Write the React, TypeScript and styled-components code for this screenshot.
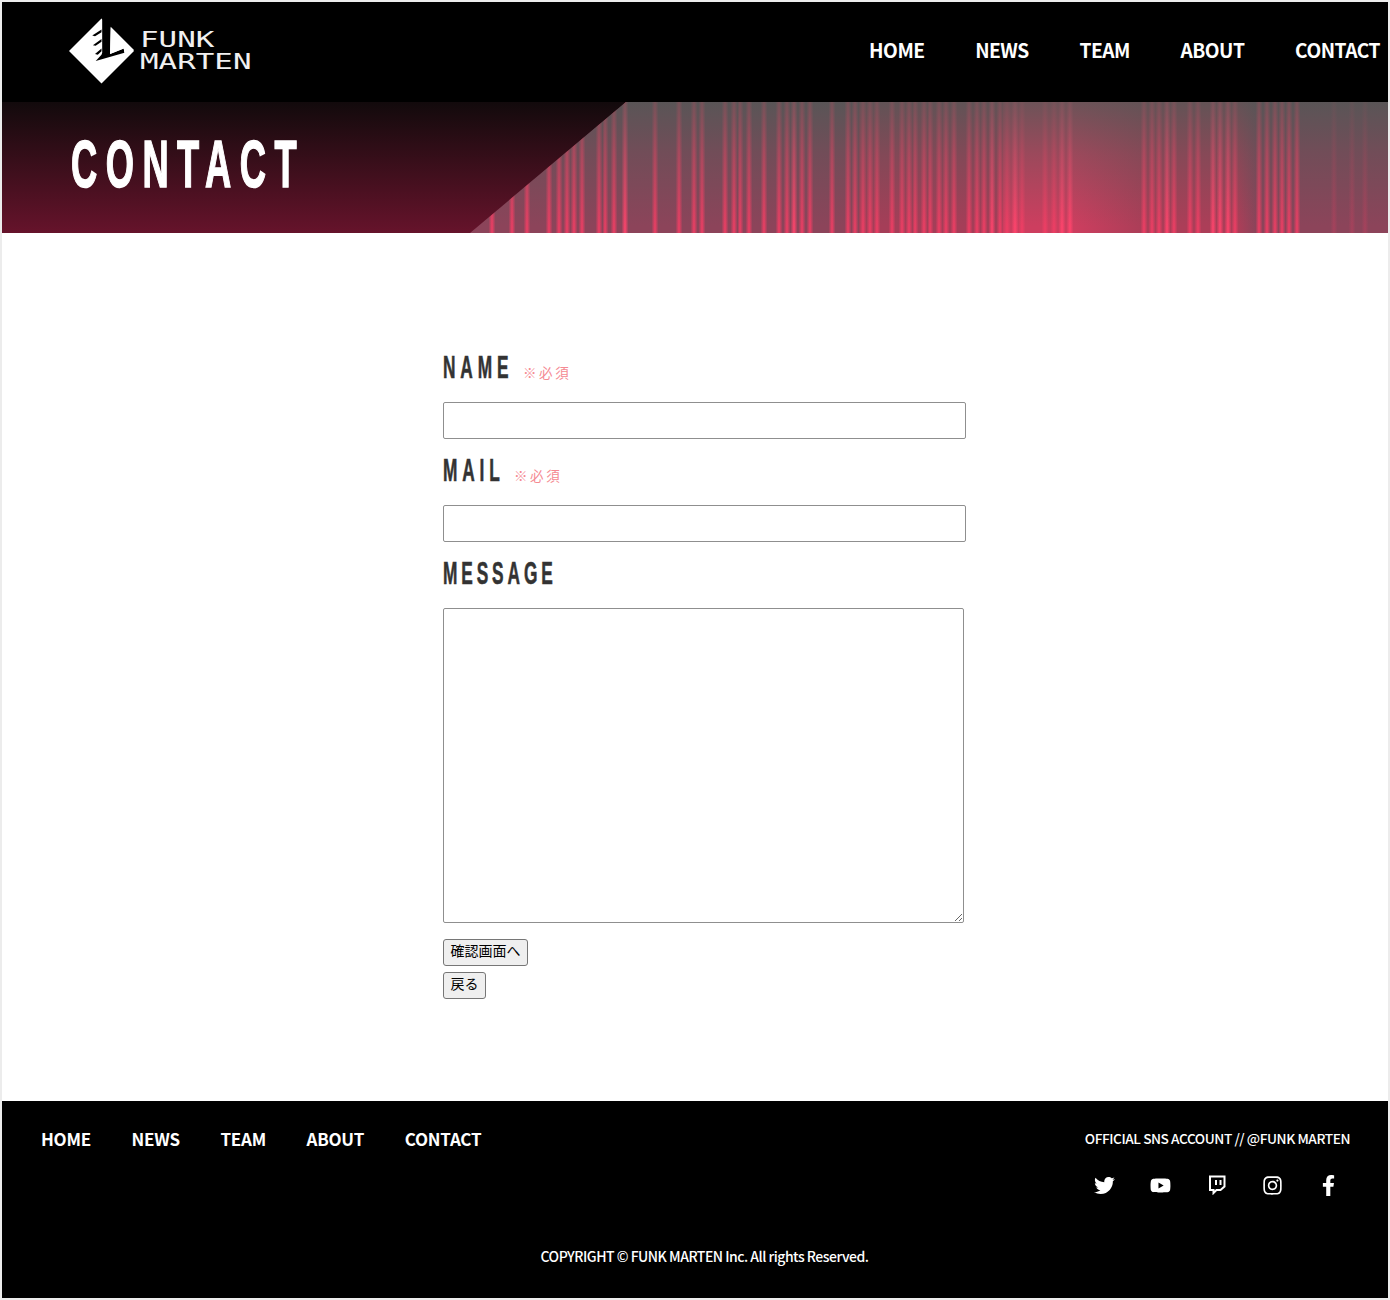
import React from 'react';
import styled, { createGlobalStyle } from 'styled-components';
import { FaTwitter, FaYoutube, FaInstagram, FaFacebookF } from 'react-icons/fa';

const STRIPES = [
    490, 510, 525, 547, 557, 565, 572, 580, 597, 603, 612, 623, 653, 677, 692, 700, 723, 732, 738, 747, 762,
    777, 785, 792, 800, 808, 830, 846, 853, 861, 868, 875, 890, 900, 907, 913, 922, 928, 937, 944, 952, 967,
    975, 982, 990, 998, 1005, 1013, 1020, 1043, 1052, 1060, 1068, 1142, 1150, 1157, 1165, 1172, 1188, 1196,
    1211, 1218, 1226, 1233, 1257, 1265, 1273, 1280, 1287, 1295, 1332, 1350, 1363,
];
const BRIGHT = [623, 792, 990, 1013, 1060, 1068, 1165, 1211, 1218, 1226];

// base tone of the band between the stripes
const baseTone = (x: number) => {
    if (x >= 1005 && x < 1115) return 'rgb(205,62,95)';
    if (x >= 1115 && x < 1240) return 'rgb(172,62,88)';
    if (x >= 860 && x < 1005) return 'rgb(165,62,88)';
    return 'rgb(140,68,90)';
};

const buildStripes = () => {
    const stops: string[] = [`rgb(140,68,90) 0px`];
    STRIPES.forEach((x) => {
        const peak = BRIGHT.includes(x) ? 'rgb(255,68,108)' : x > 1300 ? 'rgb(165,66,92)' : 'rgb(238,62,100)';
        stops.push(`${baseTone(x)} ${x - 3.5}px`, `${peak} ${x}px`, `${baseTone(x)} ${x + 3.5}px`);
    });
    stops.push('rgb(140,68,90) 100%');
    return `linear-gradient(90deg, ${stops.join(', ')})`;
};

const GlobalStyle = createGlobalStyle`
    html, body {
        margin: 0;
        padding: 0;
        background: #ffffff;
    }
    * {
        box-sizing: border-box;
    }
`;

const Page = styled.div`
    width: 1390px;
    height: 1300px;
    border: 2px solid #ececec;
    display: flex;
    flex-direction: column;
    font-family: "Noto Sans CJK JP", "Noto Sans", sans-serif;
    background: #ffffff;
`;

const Header = styled.header`
    height: 100px;
    flex-shrink: 0;
    background: #000000;
    display: flex;
    justify-content: space-between;
    align-items: flex-start;
    padding: 16px 8px 0 67px;
`;

const Logo = styled.div`
    display: flex;
    align-items: center;
    gap: 6px;
`;

const LogoMark = styled.svg`
    width: 65px;
    height: 66px;
    display: block;
`;

const LogoText = styled.div`
    font-family: "DejaVu Sans Mono", monospace;
    font-size: 21px;
    line-height: 22px;
    color: #f0f0f0;
    transform: scaleX(1.47);
    transform-origin: left center;
`;

const TopNav = styled.nav`
    display: flex;
    gap: 50.6px;
    margin-top: 17px;
`;

const TopLink = styled.a`
    color: #ffffff;
    font-size: 19.2px;
    line-height: 30px;
    font-weight: 700;
    letter-spacing: -0.5px;
`;

const TitleBand = styled.div`
    position: relative;
    height: 131px;
    flex-shrink: 0;
    background: linear-gradient(180deg, #120a0c 0%, #66132b 100%);
    padding: 26px 0 0 69px;
    overflow: hidden;
`;

const StripeOverlay = styled.div`
    position: absolute;
    inset: 0;
    clip-path: polygon(624px 0, 100% 0, 100% 100%, 468px 100%);
    background:
        linear-gradient(
            180deg,
            rgba(68, 92, 85, 0.7) 0%,
            rgba(68, 92, 85, 0.36) 40%,
            rgba(68, 92, 85, 0) 95%
        ),
        ${buildStripes()};
`;

const PageTitle = styled.h1`
    position: relative;
    display: inline-block;
    margin: 0;
    color: #ffffff;
    font-family: "Liberation Sans", sans-serif;
    font-weight: 700;
    font-size: 66px;
    line-height: 72px;
    letter-spacing: 15.4px;
    white-space: nowrap;
    -webkit-text-stroke: 1.5px #ffffff;
    transform: scaleX(0.55);
    transform-origin: left center;
`;

const Main = styled.main`
    flex: 1;
    background: #ffffff;
    padding: 103px 0 0 441px;
`;

const ContactForm = styled.form`
    display: flex;
    flex-direction: column;
    align-items: flex-start;
`;

const FieldLabel = styled.label`
    display: flex;
    align-items: baseline;
    gap: 13px;
    height: 34px;
    margin: 14px 0 18px;
`;

// the label font is squeezed, so the box keeps the width it has on screen
const LabelText = styled.span<{ $width: number; $tracking: number }>`
    display: inline-block;
    width: ${(p) => p.$width}px;
    font-family: "Liberation Sans", sans-serif;
    font-weight: 700;
    font-size: 32px;
    line-height: 34px;
    letter-spacing: ${(p) => p.$tracking}px;
    color: #333333;
    white-space: nowrap;
    -webkit-text-stroke: 0.6px #333333;
    transform: scaleX(0.54);
    transform-origin: left center;
`;

const Required = styled.span`
    font-size: 13.5px;
    letter-spacing: 2.6px;
    color: #f58a92;
`;

const TextInput = styled.input`
    display: block;
    width: 523px;
    height: 37px;
    border: 1px solid #8f8f8f;
    border-radius: 2px;
    background: #ffffff;
`;

const MessageArea = styled.textarea`
    display: block;
    width: 521px;
    height: 315px;
    border: 1px solid #8f8f8f;
    border-radius: 2px;
    background: #ffffff;
`;

const FormButton = styled.button<{ $top: number }>`
    display: block;
    height: 27px;
    margin-top: ${(p) => p.$top}px;
    padding: 0 6.5px 4px;
    font-family: "Noto Sans CJK JP", sans-serif;
    font-size: 14px;
    line-height: 19px;
    color: #000000;
    background: #efefef;
    border: 1px solid #767676;
    border-radius: 3px;
`;

const Footer = styled.footer`
    height: 197px;
    flex-shrink: 0;
    background: #000000;
    color: #ffffff;
    padding: 25px 38px 0 39px;
    display: flex;
    flex-direction: column;
`;

const FooterTop = styled.div`
    display: flex;
    justify-content: space-between;
    align-items: flex-start;
`;

const FooterNav = styled.nav`
    display: flex;
    gap: 40.6px;
`;

const FooterLink = styled.a`
    color: #ffffff;
    font-size: 17px;
    line-height: 26px;
    font-weight: 700;
    letter-spacing: -0.25px;
`;

const SnsColumn = styled.div`
    display: flex;
    flex-direction: column;
    align-items: flex-end;
`;

const SnsTitle = styled.div`
    font-size: 13.7px;
    line-height: 24px;
    font-weight: 500;
    letter-spacing: -0.45px;
`;

const SnsIcons = styled.div`
    display: flex;
    margin-top: 24px;
    margin-right: -6px;
`;

const SnsIcon = styled.a`
    width: 55.8px;
    height: 22px;
    display: flex;
    align-items: center;
    justify-content: center;
    color: #ffffff;
    font-size: 21px;
`;

const TwitchMark = styled.svg`
    width: 18px;
    height: 20px;
    display: block;
`;

const Copyright = styled.div`
    margin-top: 49px;
    margin-left: 18px;
    text-align: center;
    font-size: 14px;
    line-height: 22px;
    font-weight: 500;
    letter-spacing: -0.5px;
`;

const App = () => {
    return (
        <>
            <GlobalStyle />
            <Page>
                <Header>
                    <Logo>
                        <LogoMark viewBox="30 28 190 190">
                            <polygon points="125,28 220,123 125,218 30,123" fill="#ffffff" />
                            <polygon
                                points="127,26 152,52 150,132 190,116 192,128 108,152 125,134 127,128"
                                fill="#000000"
                            />
                            <polygon points="152,52 222,122 206,118 192,128 190,116 150,132" fill="#ffffff" />
                            <polygon points="98,78 125,60 125,68 106,80" fill="#000000" />
                            <polygon points="100,106 125,88 125,96 108,108" fill="#000000" />
                            <polygon points="106,132 125,116 125,124 114,134" fill="#000000" />
                        </LogoMark>
                        <LogoText>
                            FUNK
                            <br />
                            MARTEN
                        </LogoText>
                    </Logo>
                    <TopNav>
                        <TopLink>HOME</TopLink>
                        <TopLink>NEWS</TopLink>
                        <TopLink>TEAM</TopLink>
                        <TopLink>ABOUT</TopLink>
                        <TopLink>CONTACT</TopLink>
                    </TopNav>
                </Header>
                <TitleBand>
                    <StripeOverlay />
                    <PageTitle>CONTACT</PageTitle>
                </TitleBand>
                <Main>
                    <ContactForm>
                        <FieldLabel>
                            <LabelText $width={67} $tracking={9}>NAME</LabelText>
                            <Required>※必須</Required>
                        </FieldLabel>
                        <TextInput type="text" />
                        <FieldLabel>
                            <LabelText $width={58} $tracking={9}>MAIL</LabelText>
                            <Required>※必須</Required>
                        </FieldLabel>
                        <TextInput type="text" />
                        <FieldLabel>
                            <LabelText $width={112} $tracking={7.2}>MESSAGE</LabelText>
                        </FieldLabel>
                        <MessageArea />
                        <FormButton type="button" $top={16}>確認画面へ</FormButton>
                        <FormButton type="button" $top={6}>戻る</FormButton>
                    </ContactForm>
                </Main>
                <Footer>
                    <FooterTop>
                        <FooterNav>
                            <FooterLink>HOME</FooterLink>
                            <FooterLink>NEWS</FooterLink>
                            <FooterLink>TEAM</FooterLink>
                            <FooterLink>ABOUT</FooterLink>
                            <FooterLink>CONTACT</FooterLink>
                        </FooterNav>
                        <SnsColumn>
                            <SnsTitle>OFFICIAL SNS ACCOUNT // @FUNK MARTEN</SnsTitle>
                            <SnsIcons>
                                <SnsIcon><FaTwitter /></SnsIcon>
                                <SnsIcon><FaYoutube /></SnsIcon>
                                <SnsIcon>
                                    <TwitchMark viewBox="0 0 18 20">
                                        <path
                                            d="M2 1.5 H16.5 V11.5 L12.5 15 H8.5 L5.5 18 V15 H2 Z"
                                            fill="none"
                                            stroke="#ffffff"
                                            strokeWidth="2"
                                        />
                                        <path d="M8 5 V10 M12.5 5 V10" stroke="#ffffff" strokeWidth="2" />
                                    </TwitchMark>
                                </SnsIcon>
                                <SnsIcon><FaInstagram /></SnsIcon>
                                <SnsIcon><FaFacebookF /></SnsIcon>
                            </SnsIcons>
                        </SnsColumn>
                    </FooterTop>
                    <Copyright>COPYRIGHT © FUNK MARTEN Inc. All rights Reserved.</Copyright>
                </Footer>
            </Page>
        </>
    );
};

export default App;
